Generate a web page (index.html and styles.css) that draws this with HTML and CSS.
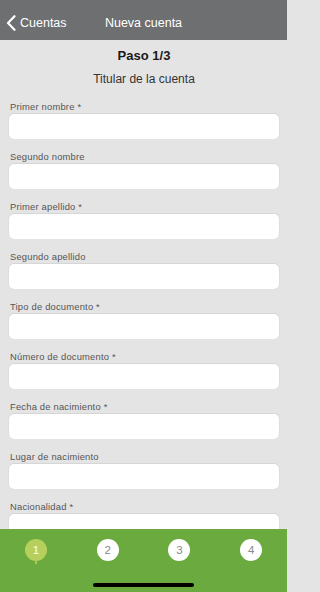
FILE: index.html
```html
<!DOCTYPE html>
<html lang="es">
<head>
<meta charset="utf-8">
<title>Nueva cuenta</title>
<link rel="stylesheet" href="styles.css">
</head>
<body>
<div class="screen">
  <header class="nav">
    <a class="back">
      <svg class="chev" width="10" height="16" viewBox="0 0 10 16"><path d="M8.5 1.2 L2 8 L8.5 14.8" fill="none" stroke="#fff" stroke-width="2.2" stroke-linecap="round" stroke-linejoin="round"/></svg>
      <span>Cuentas</span>
    </a>
    <div class="title">Nueva cuenta</div>
  </header>
  <main class="content">
    <h1 class="step">Paso 1/3</h1>
    <h2 class="section">Titular de la cuenta</h2>
    <div class="field"><label>Primer nombre *</label><div class="input"></div></div>
    <div class="field"><label>Segundo nombre</label><div class="input"></div></div>
    <div class="field"><label>Primer apellido *</label><div class="input"></div></div>
    <div class="field"><label>Segundo apellido</label><div class="input"></div></div>
    <div class="field"><label>Tipo de documento *</label><div class="input"></div></div>
    <div class="field"><label>Número de documento *</label><div class="input"></div></div>
    <div class="field"><label>Fecha de nacimiento *</label><div class="input"></div></div>
    <div class="field"><label>Lugar de nacimiento</label><div class="input"></div></div>
    <div class="field"><label>Nacionalidad *</label><div class="input"></div></div>
  </main>
  <footer class="steps">
    <div class="slot"><div class="dot active">1</div></div>
    <div class="slot"><div class="dot">2</div></div>
    <div class="slot"><div class="dot">3</div></div>
    <div class="slot"><div class="dot">4</div></div>
    <div class="home"></div>
  </footer>
</div>
</body>
</html>
```
FILE: styles.css
```css
html, body {
  margin: 0;
  padding: 0;
  height: 100%;
  overflow: hidden;
  background: #e4e4e4;
}
body {
  font-family: "Liberation Sans", Arial, sans-serif;
}
.screen {
  width: 287px;
  height: 592px;
  position: relative;
  overflow: hidden;
  background: #e4e4e4;
}
.nav {
  height: 40px;
  box-sizing: border-box;
  padding-top: 6px;
  background: #6d6f71;
  display: flex;
  align-items: center;
  position: relative;
  color: #fff;
  font-size: 12.5px;
}
.back {
  display: flex;
  align-items: center;
  padding-left: 6px;
  gap: 4px;
}
.chev {
  display: block;
}
.title {
  position: absolute;
  left: 0;
  right: 0;
  top: 6px;
  bottom: 0;
  display: flex;
  align-items: center;
  justify-content: center;
  pointer-events: none;
}
.content {
  padding: 8px 8px 0 9px;
  display: flex;
  flex-direction: column;
}
.step {
  margin: 0;
  font-size: 13px;
  line-height: 16px;
  font-weight: 700;
  color: #1a1a1a;
  text-align: center;
}
.section {
  margin: 7px 0 0;
  font-size: 12px;
  line-height: 16px;
  font-weight: 400;
  color: #333;
  text-align: center;
}
.field {
  margin-top: 14px;
  display: flex;
  flex-direction: column;
}
.field + .field {
  margin-top: 12px;
}
.field label {
  font-size: 9.4px;
  line-height: 12px;
  color: #555;
  padding-left: 1px;
  letter-spacing: 0.2px;
}
.input {
  margin-top: 1px;
  height: 25px;
  background: #fff;
  border-radius: 5px;
  box-shadow: 0 -0.5px 0 0.5px #d6d6d6;
}
.steps {
  position: absolute;
  left: 0;
  right: 0;
  bottom: 0;
  height: 63px;
  background: #6aaa3f;
  display: flex;
  align-items: flex-start;
  padding-top: 10px;
  box-sizing: border-box;
}
.slot {
  flex: 1;
  display: flex;
  justify-content: center;
}
.dot {
  width: 22px;
  height: 22px;
  border-radius: 50%;
  background: #fff;
  color: #8a8a8a;
  font-size: 11.5px;
  display: flex;
  align-items: center;
  justify-content: center;
  position: relative;
}
.dot.active {
  background: #b7cf5c;
  color: #fff;
}
.dot.active::after {
  content: "";
  position: absolute;
  left: 10px;
  bottom: -3px;
  width: 2px;
  height: 3px;
  background: #a9c75a;
}
.home {
  position: absolute;
  left: 93px;
  bottom: 5px;
  width: 101px;
  height: 4px;
  border-radius: 2px;
  background: #000;
}
```
